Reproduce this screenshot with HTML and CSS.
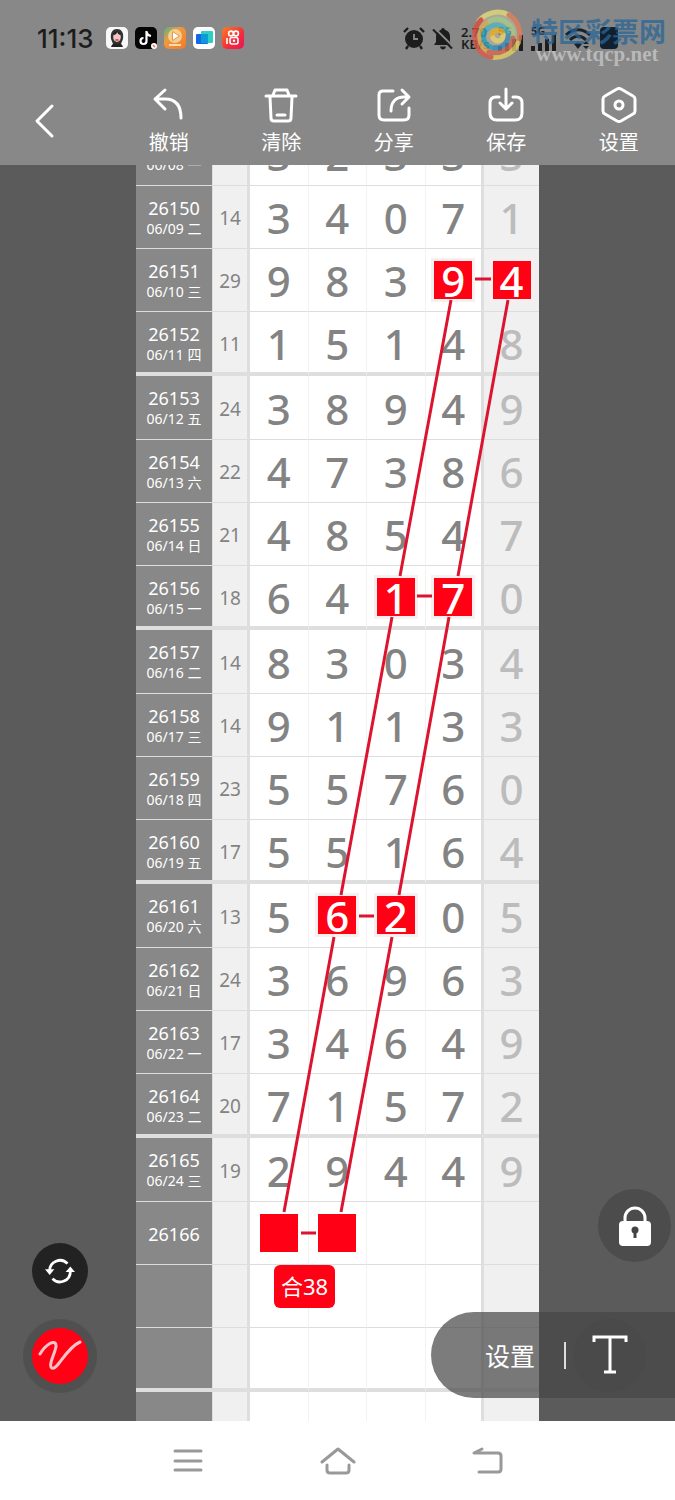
FILE: index.html
```
<!DOCTYPE html>
<html lang="zh-CN">
<head>
    <meta charset="UTF-8">
    <meta name="viewport" content="width=device-width, initial-scale=1.0">
    <title>走势图</title>
    <link rel="stylesheet" href="styles.css">
</head>
<body>
    <header class="header">
        <div class="status-bar">
            <span class="clock">11:13</span>
            <div class="apps">
                <svg viewBox="0 0 22 22"><rect width="22" height="22" rx="5" fill="#f8f8f8"/><path d="M5 12C4 5 7 2 11 2s7 3 6 10l-2 5H7z" fill="#333"/><ellipse cx="11" cy="10" rx="3.8" ry="5" fill="#f1c5c5"/><path d="M7 8c3 0 4-2 4-3 1 2 2 3 4 3-1-4-7-5-8 0z" fill="#222"/><path d="M9.500 13h3" stroke="#c33" stroke-width="1.500"/><path d="M5 20c1-4 4-4 6-3 2-1 5-1 6 3z" fill="#222"/></svg>
                <svg viewBox="0 0 22 22"><rect width="22" height="22" rx="5" fill="#050505"/><path d="M11.500 4v10a3 3 0 1 1-3-3M11.500 5c.5 2.500 2 3.500 4.500 4" fill="none" stroke="#fff" stroke-width="2.200"/><circle cx="19" cy="19" r="3" fill="#fff"/><path d="M18 18l2 2" stroke="#f26a3c" stroke-width="1.500"/></svg>
                <svg viewBox="0 0 22 22"><defs><linearGradient id="video" x2="1" y2="1"><stop stop-color="#3eb78e"/><stop offset=".35" stop-color="#ef9a41"/><stop offset="1" stop-color="#f47a26"/></linearGradient></defs><rect width="22" height="22" rx="5" fill="url(#video)"/><circle cx="11" cy="9" r="7" fill="#f5dda5" opacity=".8"/><path d="M8.500 4.500l7 4.500-7 4.500z" fill="#fff" stroke="#e99546"/><path d="M5 18h12" stroke="#fbd9b1" stroke-width="2"/></svg>
                <svg viewBox="0 0 22 22"><rect width="22" height="22" rx="5" fill="#fff"/><rect x="8" y="4" width="12" height="12" rx="1" fill="#2ccfc4"/><rect x="3" y="7" width="12" height="10" rx="1" fill="#1467e6"/><path d="M8 7h7v9H8z" fill="#0a9bd8"/></svg>
                <svg viewBox="0 0 22 22"><defs><linearGradient id="short" x2="1" y2="1"><stop stop-color="#ff7b20"/><stop offset=".6" stop-color="#f42b3b"/><stop offset="1" stop-color="#e9155a"/></linearGradient></defs><rect width="22" height="22" rx="5" fill="url(#short)"/><g fill="none" stroke="#fff" stroke-width="1.600"><circle cx="9" cy="6.500" r="2.400"/><circle cx="14" cy="6.500" r="2.400"/><rect x="8" y="10.500" width="8" height="6.500" rx="2"/><path d="M5 11v6"/></g><circle cx="12" cy="13.800" r="1.200" fill="#fff"/></svg>
            </div>
            <div class="signals">
                <svg class="icon-alarm" viewBox="0 0 22 23"><circle cx="11" cy="12" r="9" fill="#1d1d1d"/><path d="M1 5l4-4M21 5l-4-4M5 19l-2 3M17 19l2 3" stroke="#1d1d1d" stroke-width="2.400"/><path d="M11 7v5h4" fill="none" stroke="#888" stroke-width="1.800"/></svg>
                <svg class="icon-bell" viewBox="0 0 22 23"><path d="M11 1c1 0 1.800.7 1.800 1.800C16 3.600 18 6 18 9.500v5.500l2 3H2l2-3V9.500C4 6 6 3.600 9.200 2.800 9.200 1.700 10 1 11 1zM8 19.500h6c-.4 2-1.500 3-3 3s-2.600-1-3-3z" fill="#1d1d1d"/><path d="M3 1.500l19 19" stroke="#888" stroke-width="2"/><path d="M1 2.500l19 19" stroke="#1d1d1d" stroke-width="2"/></svg>
                <span class="speed">2.70<br>KB/s</span>
                <span class="network">5G<svg viewBox="0 0 26 16"><path d="M2 11v5M9 8v8M16 4v12M23 0v16" stroke="#1d1d1d" stroke-width="4"/></svg></span>
                <span class="network">5G<svg viewBox="0 0 26 16"><path d="M2 11v5M9 8v8M16 4v12M23 0v16" stroke="#1d1d1d" stroke-width="4"/></svg></span>
                <svg class="icon-wifi" viewBox="0 0 28 22"><path d="M2 8c7-7 17-7 24 0M6 13c5-5 11-5 16 0" fill="none" stroke="#16222c" stroke-width="3"/><path d="M10 17c3-2 5-2 8 0l-4 5zM19 17l3-3 3 3zM19 19l3 3 3-3z" fill="#16222c"/></svg>
                <svg class="icon-battery" viewBox="0 0 20 22"><rect x="1" width="18" height="22" rx="4" fill="#11202f"/></svg>
            </div>
            <div class="watermark">
                <svg viewBox="0 0 52 52"><circle cx="26" cy="26" r="24" fill="#e8dfb8" opacity=".45"/><g fill="none" stroke-linecap="round" stroke-width="5"><path d="M8 12C14 4 28 0 38 6" stroke="#e6dc7a"/><path d="M38 6c10 6 13 18 9 28" stroke="#e0805c"/><path d="M47 34c-4 10-16 16-27 14" stroke="#e2ce62"/><path d="M20 48C8 46 2 34 4 22" stroke="#dc5a4a"/><path d="M4 22c1-5 3-8 6-11" stroke="#e04c3c"/><path d="M18 43C6 37 6 19 19 12" stroke="#e8b04c"/><path d="M19 12c12-6 25 4 23 17" stroke="#a9d08c"/><path d="M42 29c-1 11-13 17-24 14" stroke="#d96a50"/><path d="M24 39c-12-1-15-14-7-20" stroke="#2fa5bd"/><path d="M17 19c9-7 21 0 20 9" stroke="#52b8c4"/><path d="M37 28c-1 7-6 11-13 11" stroke="#3c8fc0"/><path d="M21 27c0-6 8-8 11-2" stroke="#f0b420"/><path d="M32 26c1 6-7 8-10 3" stroke="#f0d870"/></g></svg>
                <div class="watermark-text">
                    <span class="watermark-name">特区彩票网</span>
                    <span class="watermark-url">www.tqcp.net</span>
                </div>
            </div>
        </div>
        <nav class="toolbar">
            <button class="tool back" aria-label="返回">
                <svg viewBox="0 0 36 36"><path d="M25 3L10 18l15 15"/></svg>
            </button>
            <button class="tool">
                <svg viewBox="0 0 36 36"><path d="M14 3L4 12l10 10M4 12h10c10 0 16 6 16 19"/></svg>
                <span>撤销</span>
            </button>
            <button class="tool">
                <svg viewBox="0 0 36 36"><path d="M3 9h30M10 8l2-5h12l2 5M7 10l1 21c0 2 1 3 3 3h14c2 0 3-1 3-3l1-21M14 28h8"/></svg>
                <span>清除</span>
            </button>
            <button class="tool">
                <svg viewBox="0 0 36 36"><path d="M17 4H7Q3 4 3 8v20q0 5 5 5h20q5 0 5-5v-7M26 3l7 7-7 7M32 10h-4c-8 0-13 5-13 14"/></svg>
                <span>分享</span>
            </button>
            <button class="tool">
                <svg viewBox="0 0 36 36"><path d="M11 10H8q-6 0-6 6v10q0 7 7 7h18q7 0 7-7V16q0-6-6-6h-3M18 2v20M12 16l6 6 6-6"/></svg>
                <span>保存</span>
            </button>
            <button class="tool">
                <svg viewBox="0 0 36 36"><path d="M16 2q2-1 4 0l12 7q2 1 2 3v12q0 2-2 3l-12 7q-2 1-4 0L4 27q-2-1-2-3V12q0-2 2-3z"/><circle cx="18" cy="18" r="4"/></svg>
                <span>设置</span>
            </button>
        </nav>
    </header>

    <main class="board">
        <div class="sheet">
            <table class="chart">
                <colgroup>
                    <col class="col-issue"><col class="col-sum"><col><col><col><col><col class="col-last">
                </colgroup>
                <tbody>
                    <tr><th scope="row">26149<small>06/08 一</small></th><td>19</td><td>3</td><td>2</td><td>3</td><td>3</td><td>3</td></tr>
                    <tr><th scope="row">26150<small>06/09 二</small></th><td>14</td><td>3</td><td>4</td><td>0</td><td>7</td><td>1</td></tr>
                    <tr><th scope="row">26151<small>06/10 三</small></th><td>29</td><td>9</td><td>8</td><td>3</td><td><span class="mark">9</span></td><td><span class="mark">4</span></td></tr>
                    <tr><th scope="row">26152<small>06/11 四</small></th><td>11</td><td>1</td><td>5</td><td>1</td><td>4</td><td>8</td></tr>
                    <tr><th scope="row">26153<small>06/12 五</small></th><td>24</td><td>3</td><td>8</td><td>9</td><td>4</td><td>9</td></tr>
                    <tr><th scope="row">26154<small>06/13 六</small></th><td>22</td><td>4</td><td>7</td><td>3</td><td>8</td><td>6</td></tr>
                    <tr><th scope="row">26155<small>06/14 日</small></th><td>21</td><td>4</td><td>8</td><td>5</td><td>4</td><td>7</td></tr>
                    <tr><th scope="row">26156<small>06/15 一</small></th><td>18</td><td>6</td><td>4</td><td><span class="mark">1</span></td><td><span class="mark">7</span></td><td>0</td></tr>
                    <tr><th scope="row">26157<small>06/16 二</small></th><td>14</td><td>8</td><td>3</td><td>0</td><td>3</td><td>4</td></tr>
                    <tr><th scope="row">26158<small>06/17 三</small></th><td>14</td><td>9</td><td>1</td><td>1</td><td>3</td><td>3</td></tr>
                    <tr><th scope="row">26159<small>06/18 四</small></th><td>23</td><td>5</td><td>5</td><td>7</td><td>6</td><td>0</td></tr>
                    <tr><th scope="row">26160<small>06/19 五</small></th><td>17</td><td>5</td><td>5</td><td>1</td><td>6</td><td>4</td></tr>
                    <tr><th scope="row">26161<small>06/20 六</small></th><td>13</td><td>5</td><td><span class="mark">6</span></td><td><span class="mark">2</span></td><td>0</td><td>5</td></tr>
                    <tr><th scope="row">26162<small>06/21 日</small></th><td>24</td><td>3</td><td>6</td><td>9</td><td>6</td><td>3</td></tr>
                    <tr><th scope="row">26163<small>06/22 一</small></th><td>17</td><td>3</td><td>4</td><td>6</td><td>4</td><td>9</td></tr>
                    <tr><th scope="row">26164<small>06/23 二</small></th><td>20</td><td>7</td><td>1</td><td>5</td><td>7</td><td>2</td></tr>
                    <tr><th scope="row">26165<small>06/24 三</small></th><td>19</td><td>2</td><td>9</td><td>4</td><td>4</td><td>9</td></tr>
                    <tr><th scope="row">26166</th><td></td><td><span class="mark"></span></td><td><span class="mark"></span></td><td></td><td></td><td></td></tr>
                    <tr><th></th><td></td><td></td><td></td><td></td><td></td><td></td></tr>
                    <tr><th></th><td></td><td></td><td></td><td></td><td></td><td></td></tr>
                    <tr><th></th><td></td><td></td><td></td><td></td><td></td><td></td></tr>
                </tbody>
            </table>

            <!-- lines joining the marked numbers -->
            <svg class="lines" viewBox="0 0 403 1333">
                <path d="M315 178L264 454M256 495L205 773M198 815L148 1090"/>
                <path d="M372 178L322 454M313 495L263 773M256 815L205 1090"/>
                <path d="M339 157h16M281 474h15M223 794h15M165 1111h15"/>
            </svg>
            <span class="total">合38</span>
        </div>

        <button class="float refresh" aria-label="刷新">
            <svg viewBox="0 0 32 28"><path d="M5 14A11 11 0 0 1 24 6M27 14A11 11 0 0 1 8 22" fill="none" stroke="#fff" stroke-width="3"/><path d="M0 12h10l-5 6zM22 15h10l-5-6z" fill="#fff"/></svg>
        </button>
        <button class="float pen" aria-label="画笔">
            <svg viewBox="0 0 44 32"><path d="M2 14C8 4 17-1 18 5c1 5-9 21-4 23 5 3 14-20 28-26" fill="none" stroke="#ffc4c8" stroke-width="3" stroke-linecap="round"/></svg>
        </button>
        <button class="float lock" aria-label="锁定">
            <svg viewBox="0 0 32 40"><path d="M6 18V12a10 10 0 0 1 20 0v6" fill="none" stroke="#fff" stroke-width="3"/><rect y="15" width="32" height="25" rx="4" fill="#fff"/><circle cx="16" cy="24" r="3.500" fill="#444"/><path d="M16 24v8" stroke="#444" stroke-width="3"/></svg>
        </button>
        <div class="text-bar">
            <button class="text-settings">设置</button>
            <span class="divider"></span>
            <button class="text-tool" aria-label="文字">
                <svg viewBox="0 0 36 40"><path d="M2 7V2h32v5M18 2v35M12 37h12" fill="none" stroke="#fff" stroke-width="3"/></svg>
            </button>
        </div>
    </main>

    <nav class="system-nav">
        <button aria-label="菜单"><svg viewBox="0 0 36 30"><path d="M5 5h26M5 15h26M5 24h26"/></svg></button>
        <button aria-label="主页"><svg viewBox="0 0 36 30"><path d="M2 16L18 3l16 13M7 19v5q0 3 3 3h16q3 0 3-3v-5"/></svg></button>
        <button aria-label="后退"><svg viewBox="0 0 36 30"><path d="M12 3L4 7h24q3 0 3 3v13q0 3-3 3H9"/></svg></button>
    </nav>
</body>
</html>
```
FILE: styles.css
```
* {
    box-sizing: border-box;
}

body {
    margin: 0;
    height: 100vh;
    display: flex;
    flex-direction: column;
    background: #fff;
    font-family: "Noto Sans", "Noto Sans CJK SC", sans-serif;
}

button {
    border: 0;
    padding: 0;
    background: none;
    color: inherit;
    font: inherit;
}

svg {
    display: block;
}

/* Header */
.header {
    background: #888;
    color: #fff;
    position: relative;
    z-index: 1;
}

.status-bar {
    display: flex;
    align-items: center;
    height: 76px;
    padding: 0 56px 0 37px;
    color: #1d1d1d;
    position: relative;
}

.clock {
    font-family: Inter, sans-serif;
    font-size: 26px;
    font-weight: 500;
}

.apps {
    display: flex;
    gap: 7px;
    margin-left: 12px;
}

.apps svg {
    width: 22px;
    height: 22px;
}

.signals {
    display: flex;
    align-items: center;
    gap: 7px;
    margin-left: auto;
}

.icon-alarm,
.icon-bell {
    width: 22px;
    height: 23px;
}

.speed {
    font-size: 13px;
    font-weight: 600;
    line-height: 12px;
    width: 30px;
}

.network {
    font-size: 11px;
    font-weight: 700;
    line-height: 9px;
}

.network svg {
    width: 26px;
    height: 16px;
}

.icon-wifi {
    width: 28px;
    height: 22px;
}

.icon-battery {
    width: 20px;
    height: 22px;
}

.watermark {
    position: absolute;
    top: 9px;
    right: 9px;
    display: flex;
    gap: 8px;
}

.watermark svg {
    width: 52px;
    height: 52px;
    opacity: 0.8;
}

.watermark-text {
    display: flex;
    flex-direction: column;
    padding-top: 6px;
}

.watermark-name {
    font-family: "Noto Sans CJK SC", sans-serif;
    font-size: 27px;
    font-weight: 700;
    line-height: 32px;
    color: rgba(40, 100, 150, 0.75);
}

.watermark-url {
    padding-left: 5px;
    font-family: "Liberation Serif", serif;
    font-size: 21px;
    font-weight: 700;
    line-height: 14px;
    color: rgba(195, 195, 195, 0.85);
}

.toolbar {
    display: grid;
    grid-template-columns: repeat(6, 1fr);
    height: 89px;
}

.tool {
    display: flex;
    flex-direction: column;
    align-items: center;
    padding-top: 11px;
    font-size: 20px;
    line-height: 40px;
}

.tool svg {
    width: 36px;
    height: 36px;
    fill: none;
    stroke: #fff;
    stroke-width: 3;
    stroke-linecap: round;
    stroke-linejoin: round;
}

.back {
    align-items: flex-start;
    padding-top: 27px;
    padding-left: 27px;
}

/* Chart */
.board {
    flex: 1;
    min-height: 0;
    overflow: hidden;
    position: relative;
    background: #5b5b5b;
}

/* scrolled a little way down, the first row is partly under the header */
.sheet {
    width: 403px;
    margin: -43px auto 0;
    position: relative;
}

.chart {
    width: 100%;
    table-layout: fixed;
    border-collapse: separate;
    border-spacing: 0;
    background: #fff;
}

.col-issue {
    width: 77px;
}

.col-sum {
    width: 37px;
}

.col-last {
    width: 55px;
}

.chart tr {
    height: 63px;
}

.chart tr:nth-child(4n),
.chart tr:nth-child(4n+1) {
    height: 64px;
}

.chart th,
.chart td {
    padding: 2px 0 0;
    text-align: center;
    border-bottom: 1px solid #ddd;
    border-right: 1px solid #f2f2f2;
}

.chart tr:nth-child(4n) th,
.chart tr:nth-child(4n) td {
    padding-top: 4px;
    border-bottom: 4px solid #dedede;
}

.chart th {
    background: #888;
    color: #fff;
    font-size: 18px;
    font-weight: 400;
    line-height: 21px;
    border-right-color: #ddd;
}

.chart small {
    display: block;
    font-size: 14px;
    line-height: 20px;
}

.chart td {
    font-size: 42px;
    font-weight: 500;
    line-height: 38px;
    color: #838383;
}

.chart td:nth-child(2) {
    background: #f0f0f0;
    border-right: 3px solid #dedede;
    font-size: 19px;
    font-weight: 400;
}

.chart td:nth-child(6) {
    border-right: 3px solid #dedede;
}

.chart td:last-child {
    background: #f0f0f0;
    border-right: 0;
    color: #bcbcbc;
}

.chart .mark {
    display: block;
    width: 38px;
    height: 38px;
    margin: 0 auto 3px;
    background: #ff0015;
    color: #fff;
    line-height: 40px;
    box-shadow: 0 0 0 3px #f8efef;
}

.chart .mark:empty {
    box-shadow: none;
}

.lines {
    position: absolute;
    top: 0;
    left: 0;
    width: 100%;
    fill: none;
    stroke: #dc1430;
    stroke-width: 3;
}

.total {
    position: absolute;
    top: 1143px;
    left: 138px;
    padding: 0 7px;
    border-radius: 6px;
    background: #ff0015;
    color: #fff;
    font-size: 22px;
    line-height: 43px;
}

/* Floating tools */
.float {
    position: absolute;
    display: flex;
    align-items: center;
    justify-content: center;
    border-radius: 50%;
}

.refresh {
    left: 32px;
    bottom: 122px;
    width: 56px;
    height: 56px;
    background: #222;
}

.refresh svg {
    width: 30px;
}

.pen {
    left: 23px;
    bottom: 28px;
    width: 74px;
    height: 74px;
    border: 9px solid #505050;
    background: #ff0015;
}

.pen svg {
    width: 44px;
}

.lock {
    right: 4px;
    bottom: 159px;
    width: 73px;
    height: 73px;
    background: #4c4c4c;
}

.lock svg {
    width: 32px;
}

.text-bar {
    position: absolute;
    right: 0;
    bottom: 23px;
    display: flex;
    align-items: center;
    height: 86px;
    padding: 0 29px 0 54px;
    border-radius: 43px 0 0 43px;
    background: rgba(70, 70, 70, 0.71);
    color: #fff;
}

.text-settings {
    font-size: 25px;
}

.divider {
    width: 2px;
    height: 27px;
    margin: 0 7px 0 29px;
    background: #ddd;
}

.text-tool {
    display: flex;
    align-items: center;
    justify-content: center;
    width: 73px;
    height: 73px;
    border-radius: 50%;
    background: rgba(70, 70, 70, 0.3);
}

.text-tool svg {
    width: 36px;
}

/* System navigation */
.system-nav {
    display: flex;
    align-items: center;
    justify-content: center;
    gap: 114px;
    height: 79px;
}

.system-nav svg {
    width: 36px;
    height: 30px;
    fill: none;
    stroke: #999;
    stroke-width: 3;
    stroke-linecap: round;
    stroke-linejoin: round;
}
```
